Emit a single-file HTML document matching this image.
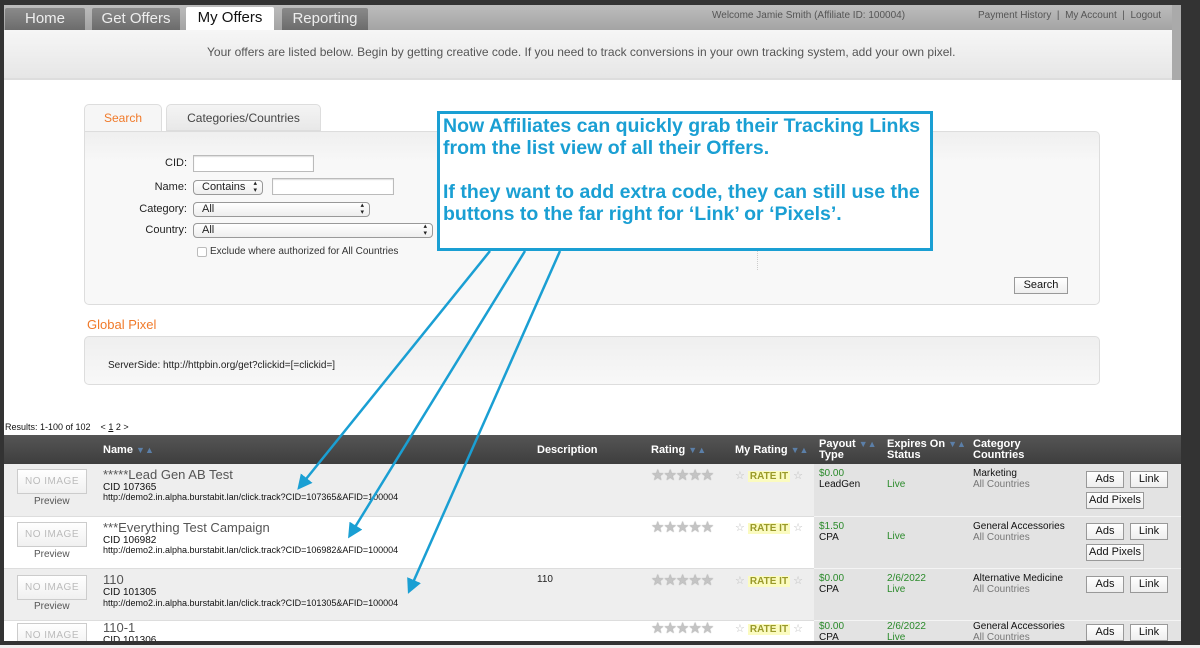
<!DOCTYPE html>
<html><head><meta charset="utf-8"><style>
*{margin:0;padding:0;box-sizing:border-box}
body{width:1200px;height:648px;position:relative;overflow:hidden;background:#333;font-family:"Liberation Sans",Arial,sans-serif;font-size:11px;color:#222}
.a{position:absolute}
#page{position:absolute;left:4px;top:5px;width:1177px;height:636px;background:#fff;overflow:hidden}
.tab{position:absolute;top:3px;height:22px;background:linear-gradient(#8a8a8a,#6c6c6c);color:#eee;font-size:15px;text-align:center;line-height:22px;border-radius:2px 2px 0 0}
.lbl{position:absolute;text-align:right;width:80px;font-size:11px;color:#222}
.inp{position:absolute;height:17px;border:1px solid #bbb;background:#fff;box-shadow:inset 0 1px 1px #ddd}
.sel{position:absolute;height:15px;border:1px solid #999;border-radius:4px;background:linear-gradient(#fff,#eee);font-size:11px;padding-left:8px;line-height:13px}
.sel:after{content:"\25B4\A\25BE";white-space:pre;position:absolute;right:5px;top:-1px;font-size:7px;line-height:7px}
.hdr{position:absolute;top:0;color:#fff;font-weight:bold;font-size:11px;line-height:11px}
.ar{color:#5b7fa8;font-size:9px}
.row{position:absolute;left:0;width:1177px;height:52px}
.noimg{position:absolute;left:13px;width:70px;height:25px;border:1px solid #ccc;background:linear-gradient(#fff,#f0f0f0);color:#bbb;font-size:10px;text-align:center;line-height:23px;letter-spacing:.5px}
.prev{position:absolute;left:30px;color:#555;font-size:10px}
.nm{position:absolute;left:99px;font-size:13px;color:#555}
.cid{position:absolute;left:99px;font-size:10px;color:#111}
.url{position:absolute;left:99px;font-size:9px;color:#111}
.stars{position:absolute;left:647px;color:#c4c4c4;font-size:15px;letter-spacing:-1px;text-shadow:0 0 1px #777}
.rate{position:absolute;left:731px;font-size:11px;color:#bbb}
.rate b{background:#fbfbc0;color:#9a9a2a;font-size:10px;padding:0 2px}
.pay{position:absolute;left:815px;font-size:10px;line-height:11px;color:#111}
.g{color:#2a8a2a}
.cat{position:absolute;left:969px;font-size:10px;line-height:11px;color:#111}
.cat span{color:#777}
.btn{position:absolute;height:17px;border:1px solid #999;background:linear-gradient(#fff,#eee);font-size:11px;text-align:center;line-height:15px;color:#111}
</style></head><body>
<div id="page">
 <div class="a" style="left:0;top:0;width:1177px;height:25px;background:linear-gradient(#bcbcbc,#a4a4a4)"></div>
 <div class="tab" style="left:1px;width:80px">Home</div>
 <div class="tab" style="left:88px;width:88px">Get Offers</div>
 <div class="tab" style="left:182px;width:88px;background:#fff;color:#111;height:23px;top:2px">My Offers</div>
 <div class="tab" style="left:278px;width:86px">Reporting</div>
 <div class="a" style="left:708px;top:5px;color:#555;font-size:10px">Welcome Jamie Smith (Affiliate ID: 100004)</div>
 <div class="a" style="left:974px;top:5px;color:#555;font-size:10px">Payment History &nbsp;| &nbsp;My Account &nbsp;| &nbsp;Logout</div>
 <div class="a" style="left:1168px;top:0;width:9px;height:75px;background:#aaa"></div>
 <div class="a" style="left:0;top:25px;width:1168px;height:50px;background:linear-gradient(#f6f6f6,#e6e6e6);border-bottom:2px solid #ddd"></div>
 <div class="a" style="left:203px;top:40px;color:#555;font-size:12px">Your offers are listed below. Begin by getting creative code. If you need to track conversions in your own tracking system, add your own pixel.</div>

 <div class="a" style="left:80px;top:99px;width:78px;height:28px;border:1px solid #ddd;border-bottom:none;border-radius:5px 5px 0 0;background:#f6f6f6;color:#f07a2a;font-size:12px;text-align:center;line-height:26px">Search</div>
 <div class="a" style="left:162px;top:99px;width:155px;height:27px;border:1px solid #ddd;border-radius:5px 5px 0 0;background:linear-gradient(#f4f4f4,#e8e8e8);color:#444;font-size:12px;text-align:center;line-height:26px">Categories/Countries</div>
 <div class="a" style="left:80px;top:126px;width:1016px;height:174px;border:1px solid #ddd;border-radius:0 5px 5px 5px;background:linear-gradient(#efefef,#f8f8f8 30px,#f8f8f8)"></div>
 <div class="lbl" style="left:103px;top:152px">CID:</div>
 <div class="inp" style="left:189px;top:150px;width:121px"></div>
 <div class="lbl" style="left:103px;top:176px">Name:</div>
 <div class="sel" style="left:189px;top:175px;width:70px">Contains</div>
 <div class="inp" style="left:268px;top:173px;width:122px"></div>
 <div class="lbl" style="left:103px;top:198px">Category:</div>
 <div class="sel" style="left:189px;top:197px;width:177px">All</div>
 <div class="lbl" style="left:103px;top:219px">Country:</div>
 <div class="sel" style="left:189px;top:218px;width:240px">All</div>
 <div class="a" style="left:193px;top:242px;width:10px;height:10px;border:1px solid #bbb;border-radius:2px;background:#fff"></div>
 <div class="a" style="left:206px;top:241px;font-size:10px;color:#333">Exclude where authorized for All Countries</div>
 <div class="a" style="left:753px;top:245px;width:1px;height:20px;border-left:1px dotted #ccc"></div>
 <div class="btn" style="left:1010px;top:272px;width:54px">Search</div>

 <div class="a" style="left:83px;top:312px;color:#f07a2a;font-size:13px">Global Pixel</div>
 <div class="a" style="left:80px;top:331px;width:1016px;height:49px;border:1px solid #ddd;border-radius:5px;background:linear-gradient(#efefef,#f8f8f8)"></div>
 <div class="a" style="left:104px;top:355px;font-size:10px;color:#222">ServerSide: http://httpbin.org/get?clickid=[=clickid=]</div>

 <div class="a" style="left:1px;top:417px;font-size:9px;color:#111">Results: 1-100 of 102 &nbsp;&nbsp;&nbsp;&lt; <u>1</u> 2 &gt;</div>

 <div class="a" style="left:0;top:430px;width:1177px;height:29px;background:linear-gradient(#555,#3e3e3e)">
  <div class="hdr" style="left:99px;top:10px">Name <span class="ar">▼▲</span></div>
  <div class="hdr" style="left:533px;top:10px">Description</div>
  <div class="hdr" style="left:647px;top:10px">Rating <span class="ar">▼▲</span></div>
  <div class="hdr" style="left:731px;top:10px">My Rating <span class="ar">▼▲</span></div>
  <div class="hdr" style="left:815px;top:4px">Payout <span class="ar">▼▲</span><br>Type</div>
  <div class="hdr" style="left:883px;top:4px">Expires On <span class="ar">▼▲</span><br>Status</div>
  <div class="hdr" style="left:969px;top:4px">Category<br>Countries</div>
 </div>

 <div class="row" style="top:459px;background:#eee"></div>
 <div class="row" style="top:511px;background:#fff;border-top:1px solid #ddd"></div>
 <div class="row" style="top:563px;background:#eee;border-top:1px solid #ddd"></div>
 <div class="row" style="top:615px;background:#fff;border-top:1px solid #ddd"></div>
 <div class="a" style="left:810px;top:459px;width:367px;height:180px;background:#e3e3e3"></div>
 <div class="a" style="left:810px;top:511px;width:367px;height:1px;background:#f4f4f4"></div>
 <div class="a" style="left:810px;top:563px;width:367px;height:1px;background:#f4f4f4"></div>
 <div class="a" style="left:810px;top:615px;width:367px;height:1px;background:#f4f4f4"></div>

 <div class="noimg" style="top:464px">NO IMAGE</div><div class="prev" style="top:491px">Preview</div>
 <div class="nm" style="top:462px">*****Lead Gen AB Test</div>
 <div class="cid" style="top:477px">CID 107365</div>
 <div class="url" style="top:487px">http://demo2.in.alpha.burstabit.lan/click.track?CID=107365&amp;AFID=100004</div>
 <div class="stars" style="top:461px">★★★★★</div>
 <div class="rate" style="top:464px">☆ <b>RATE IT</b> ☆</div>
 <div class="pay" style="top:463px"><span class="g">$0.00</span><br>LeadGen</div>
 <div class="pay g" style="left:883px;top:474px">Live</div>
 <div class="cat" style="top:463px">Marketing<br><span>All Countries</span></div>
 <div class="btn" style="left:1082px;top:466px;width:38px">Ads</div>
 <div class="btn" style="left:1126px;top:466px;width:38px">Link</div>
 <div class="btn" style="left:1082px;top:487px;width:58px">Add Pixels</div>

 <div class="noimg" style="top:517px">NO IMAGE</div><div class="prev" style="top:544px">Preview</div>
 <div class="nm" style="top:515px">***Everything Test Campaign</div>
 <div class="cid" style="top:530px">CID 106982</div>
 <div class="url" style="top:540px">http://demo2.in.alpha.burstabit.lan/click.track?CID=106982&amp;AFID=100004</div>
 <div class="stars" style="top:513px">★★★★★</div>
 <div class="rate" style="top:516px">☆ <b>RATE IT</b> ☆</div>
 <div class="pay" style="top:516px"><span class="g">$1.50</span><br>CPA</div>
 <div class="pay g" style="left:883px;top:526px">Live</div>
 <div class="cat" style="top:516px">General Accessories<br><span>All Countries</span></div>
 <div class="btn" style="left:1082px;top:518px;width:38px">Ads</div>
 <div class="btn" style="left:1126px;top:518px;width:38px">Link</div>
 <div class="btn" style="left:1082px;top:539px;width:58px">Add Pixels</div>

 <div class="noimg" style="top:570px">NO IMAGE</div><div class="prev" style="top:596px">Preview</div>
 <div class="nm" style="top:567px">110</div>
 <div class="cid" style="top:582px">CID 101305</div>
 <div class="url" style="top:593px">http://demo2.in.alpha.burstabit.lan/click.track?CID=101305&amp;AFID=100004</div>
 <div class="a" style="left:533px;top:569px;font-size:10px">110</div>
 <div class="stars" style="top:566px">★★★★★</div>
 <div class="rate" style="top:569px">☆ <b>RATE IT</b> ☆</div>
 <div class="pay" style="top:568px"><span class="g">$0.00</span><br>CPA</div>
 <div class="pay g" style="left:883px;top:568px">2/6/2022<br>Live</div>
 <div class="cat" style="top:568px">Alternative Medicine<br><span>All Countries</span></div>
 <div class="btn" style="left:1082px;top:571px;width:38px">Ads</div>
 <div class="btn" style="left:1126px;top:571px;width:38px">Link</div>

 <div class="noimg" style="top:618px">NO IMAGE</div>
 <div class="nm" style="top:615px">110-1</div>
 <div class="cid" style="top:630px">CID 101306</div>
 <div class="stars" style="top:614px">★★★★★</div>
 <div class="rate" style="top:617px">☆ <b>RATE IT</b> ☆</div>
 <div class="pay" style="top:616px"><span class="g">$0.00</span><br>CPA</div>
 <div class="pay g" style="left:883px;top:616px">2/6/2022<br>Live</div>
 <div class="cat" style="top:616px">General Accessories<br><span>All Countries</span></div>
 <div class="btn" style="left:1082px;top:619px;width:38px">Ads</div>
 <div class="btn" style="left:1126px;top:619px;width:38px">Link</div>
</div>
<div class="a" style="left:0;top:645px;width:1200px;height:3px;background:#f0f0f0"></div>

<div class="a" style="left:437px;top:111px;width:496px;height:140px;border:3px solid #1a9fd3;background:#fff;color:#1a9fd3;font-weight:bold;font-size:19.5px;line-height:22px;padding:1px 0 0 3px;letter-spacing:0;white-space:nowrap;overflow:hidden">Now Affiliates can quickly grab their Tracking Links<br>from the list view of all their Offers.<br><br>If they want to add extra code, they can still use the<br>buttons to the far right for ‘Link’ or ‘Pixels’.</div>
<svg class="a" style="left:0;top:0" width="1200" height="648">
 <defs><marker id="m" markerWidth="6" markerHeight="6" refX="3" refY="3" orient="auto" markerUnits="strokeWidth"><path d="M0,0 L6,3 L0,6 z" fill="#1a9fd3"/></marker></defs>
 <g stroke="#1a9fd3" stroke-width="2.5" fill="none">
  <line x1="490" y1="251" x2="302" y2="484" marker-end="url(#m)"/>
  <line x1="525" y1="251" x2="352" y2="532" marker-end="url(#m)"/>
  <line x1="560" y1="251" x2="411" y2="587" marker-end="url(#m)"/>
 </g>
</svg>
</body></html>
